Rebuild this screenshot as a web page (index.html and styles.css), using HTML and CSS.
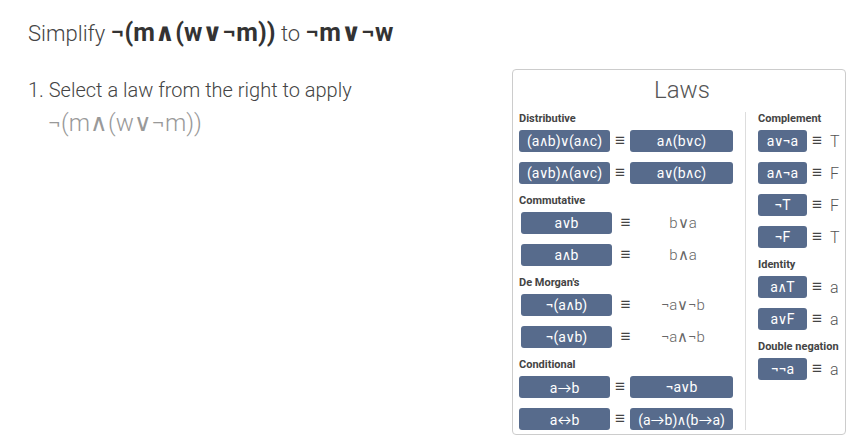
FILE: index.html
```html
<!DOCTYPE html>
<html lang="en">
<head>
    <meta charset="UTF-8">
    <meta name="viewport" content="width=device-width, initial-scale=1.0">
    <title>Simplify</title>
    <link rel="stylesheet" href="styles.css">
</head>
<body>
    <h1 class="goal">Simplify <b>¬(m∧(w∨¬m))</b> to <b>¬m∨¬w</b></h1>

    <div class="page">
        <div class="steps">
            <p class="step">1. Select a law from the right to apply</p>
            <p class="expr">¬(m∧(w∨¬m))</p>
        </div>

        <div class="panel">
            <h2>Laws</h2>
            <div class="columns">
                <div class="col">
                    <div class="label">Distributive</div>
                    <div class="law">
                        <button class="lhs">(a∧b)∨(a∧c)</button>
                        <span class="eq">≡</span>
                        <button class="rhs">a∧(b∨c)</button>
                    </div>
                    <div class="law">
                        <button class="lhs">(a∨b)∧(a∨c)</button>
                        <span class="eq">≡</span>
                        <button class="rhs">a∨(b∧c)</button>
                    </div>

                    <div class="label">Commutative</div>
                    <div class="law plain">
                        <button class="lhs">a∨b</button>
                        <span class="eq">≡</span>
                        <span class="rhs">b∨a</span>
                    </div>
                    <div class="law plain">
                        <button class="lhs">a∧b</button>
                        <span class="eq">≡</span>
                        <span class="rhs">b∧a</span>
                    </div>

                    <div class="label">De Morgan's</div>
                    <div class="law plain">
                        <button class="lhs">¬(a∧b)</button>
                        <span class="eq">≡</span>
                        <span class="rhs">¬a∨¬b</span>
                    </div>
                    <div class="law plain">
                        <button class="lhs">¬(a∨b)</button>
                        <span class="eq">≡</span>
                        <span class="rhs">¬a∧¬b</span>
                    </div>

                    <div class="label">Conditional</div>
                    <div class="law">
                        <button class="lhs">a<span class="arr">→</span>b</button>
                        <span class="eq">≡</span>
                        <button class="rhs">¬a∨b</button>
                    </div>
                    <div class="law">
                        <button class="lhs">a<span class="arr">↔</span>b</button>
                        <span class="eq">≡</span>
                        <button class="rhs">(a<span class="arr">→</span>b)∧(b<span class="arr">→</span>a)</button>
                    </div>
                </div>

                <div class="col side">
                    <div class="label">Complement</div>
                    <div class="law"><button class="lhs">a∨¬a</button><span class="eq">≡</span><span class="val">T</span></div>
                    <div class="law"><button class="lhs">a∧¬a</button><span class="eq">≡</span><span class="val">F</span></div>
                    <div class="law"><button class="lhs">¬T</button><span class="eq">≡</span><span class="val">F</span></div>
                    <div class="law"><button class="lhs">¬F</button><span class="eq">≡</span><span class="val">T</span></div>

                    <div class="label">Identity</div>
                    <div class="law"><button class="lhs">a∧T</button><span class="eq">≡</span><span class="val">a</span></div>
                    <div class="law"><button class="lhs">a∨F</button><span class="eq">≡</span><span class="val">a</span></div>

                    <div class="label">Double negation</div>
                    <div class="law"><button class="lhs">¬¬a</button><span class="eq">≡</span><span class="val">a</span></div>
                </div>
            </div>
        </div>
    </div>
</body>
</html>
```

FILE: styles.css
```css
body {
    font-family: Roboto, "DejaVu Sans", sans-serif;
    font-weight: 300;
    color: #444;
    margin: 0;
    padding: 0;
}

.goal {
    font-size: 22px;
    font-weight: 300;
    margin: 0;
    padding: 19px 0 0 28px;
    line-height: 28px;
}

.goal b {
    font-size: 25px;
    font-weight: 700;
    color: #333;
}

.page {
    display: flex;
    padding: 21px 12px 0 28px;
}

.steps {
    flex: 1;
}

.step {
    font-size: 20px;
    margin: 8px 0 0;
    line-height: 26px;
}

.expr {
    font-size: 24px;
    color: #999;
    margin: 5px 0 0 20px;
    line-height: 30px;
}

.panel {
    width: 334px;
    border: 1px solid #ccc;
    border-radius: 4px;
    padding: 0 0 4px 6px;
    box-sizing: border-box;
}

.panel h2 {
    font-size: 24px;
    font-weight: 300;
    color: #555;
    text-align: center;
    margin: 0;
    padding: 5px 0 0;
    line-height: 30px;
    height: 37px;
}

.columns {
    display: flex;
}

.col {
    width: 226px;
}

.side {
    flex: 1;
    border-left: 1px solid #ddd;
    padding-left: 12px;
}

.label {
    font-size: 11px;
    font-weight: 700;
    color: #444;
    line-height: 13px;
    margin-bottom: 5px;
}

.law {
    display: flex;
    align-items: center;
    height: 22px;
    margin-bottom: 10px;
}

.col > .law:last-child {
    margin-bottom: 0;
}

button {
    font-family: Roboto, "DejaVu Sans Mono", monospace;
    font-size: 14px;
    font-weight: 400;
    color: #fff;
    background-color: #576b8c;
    border: none;
    border-radius: 3px;
    height: 22px;
    padding: 0;
    cursor: pointer;
}

.arr {
    font-family: Lato, sans-serif;
}

.lhs {
    width: 91px;
}

.rhs {
    width: 103px;
}

.eq {
    width: 20px;
    text-align: center;
    font-family: "Liberation Sans", sans-serif;
    font-size: 17px;
    line-height: 22px;
    color: #444;
}

.plain {
    padding-left: 2px;
}

.plain .eq {
    width: 27px;
}

.plain .rhs {
    width: 88px;
    text-align: center;
    font-size: 15px;
    color: #666;
}

.side .lhs {
    width: 49px;
}

.side .eq {
    width: 20px;
}

.val {
    font-size: 16px;
    color: #555;
    padding-left: 3px;
}
```
